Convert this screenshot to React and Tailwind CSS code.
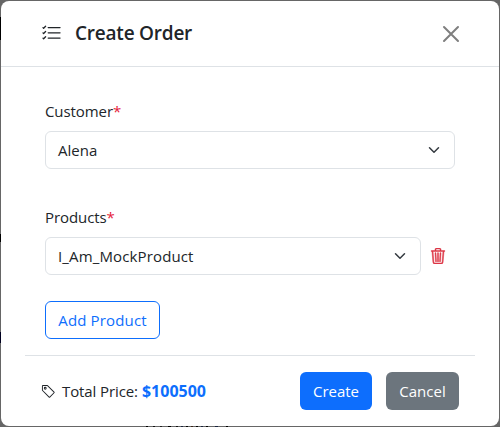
import { BsListCheck, BsTag, BsTrash3 } from "react-icons/bs";

function Select({ value, className, textClassName = "" }) {
  return (
    <div className={`flex h-[38px] items-center justify-between rounded-md border border-[#dee2e6] px-3 ${className}`}>
      <span className={textClassName}>{value}</span>
      <svg viewBox="0 0 16 16" className="h-3 w-4" fill="none" stroke="#343a40" strokeWidth="2" strokeLinecap="round" strokeLinejoin="round">
        <path d="m2 5 6 6 6-6" />
      </svg>
    </div>
  );
}

function Label({ children }) {
  return (
    <div className="mb-2 h-6 leading-6 tracking-[-0.08px]">
      {children}
      <span className="text-[#e5203a]">*</span>
    </div>
  );
}

// Tops of the page text that show just below the dialog.
function PageTextEdge() {
  return (
    <div className="absolute bottom-0 left-[146px] flex h-px gap-[3px]">
      <i className="mr-[2px] w-[2px] bg-black" />
      <i className="mr-[2px] w-[2px] bg-[#111]" />
      <i className="mr-[3px] w-[2px] bg-[#222]" />
      <i className="mr-[2px] w-[3px] bg-black" />
      <i className="w-[2px] bg-[#111]" />
      <i className="w-[2px] bg-[#18233d]" />
      <i className="w-[2px] bg-black" />
      <i className="w-[2px] bg-[#3b2416]" />
      <i className="w-[2px] bg-black" />
      <i className="w-[2px] bg-[#18233d]" />
      <i className="mr-[4px] w-[2px] bg-black" />
      <i className="mr-[5px] w-[3px] bg-[#18233d]" />
      <i className="w-[2px] bg-black" />
    </div>
  );
}

export default function App() {
  return (
    <div className="relative h-[427px] w-[500px] overflow-hidden bg-[#666] p-px font-['Open_Sans','Noto_Sans',sans-serif] text-[15px] text-[#212529]">
      <div className="absolute top-[17px] left-0 h-[23px] w-px bg-black" />
      <div className="absolute top-[234px] left-0 h-2 w-px bg-black" />
      <div className="absolute top-[332px] left-0 h-[11px] w-px bg-[#000020]" />
      <PageTextEdge />
      <div className="relative flex h-[425px] w-[498px] flex-col rounded-lg bg-white">
        <header className="flex h-[66px] shrink-0 items-center border-b border-[#dee2e6] px-10">
          <BsListCheck className="size-[21px]" />
          <h1 className="ml-[13px] text-[19px] font-semibold tracking-[-0.22px]">Create Order</h1>
          <svg viewBox="0 0 16 16" className="ml-auto size-4 overflow-visible" stroke="#7f7f7f" strokeWidth="2" strokeLinecap="round">
            <path d="M1 1l14 14M15 1L1 15" />
          </svg>
        </header>
        <main className="h-[288px] shrink-0 px-11 pt-8">
          <Label>Customer</Label>
          <Select value="Alena" className="w-[410px]" />
          <div className="h-9" />
          <Label>Products</Label>
          <div className="flex items-center">
            <Select value="I_Am_MockProduct" className="w-[376px]" textClassName="tracking-[0.14px]" />
            <BsTrash3 className="ml-[9px] size-4 stroke-[0.5] text-[#dc3545]" />
          </div>
          <button className="mt-[26px] h-[38px] w-[115px] rounded-md border border-[#0d6efd] tracking-[0.15px] text-[#0d6efd]">Add Product</button>
        </main>
        <footer className="mx-6 flex h-[71px] shrink-0 items-center border-t border-[#dee2e6] px-4">
          <BsTag className="size-[15px]" />
          <span className="ml-[6px] tracking-[-0.1px]">Total Price:</span>
          <span className="ml-1 text-base font-bold text-[#0d6efd]">$100500</span>
          <button className="ml-auto h-[38px] w-[72px] rounded-md bg-[#0d6efd] text-white">Create</button>
          <button className="ml-[14px] h-[38px] w-[73px] rounded-md bg-[#6c757d] text-white">Cancel</button>
        </footer>
      </div>
    </div>
  );
}
